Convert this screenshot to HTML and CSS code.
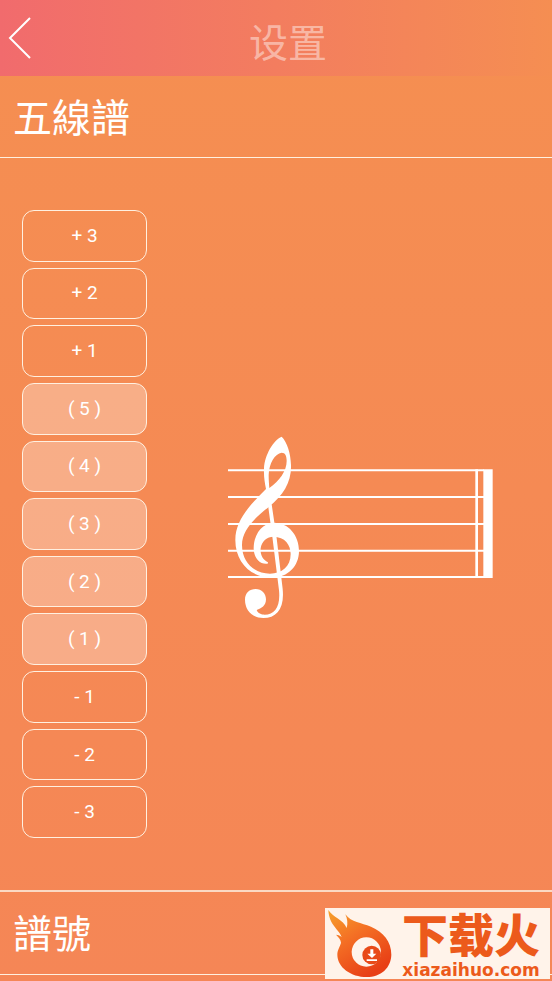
FILE: index.html
```html
<!DOCTYPE html>
<html lang="zh">
<head>
<meta charset="utf-8">
<meta name="viewport" content="width=device-width, initial-scale=1">
<title>设置</title>
<link rel="stylesheet" href="styles.css">
</head>
<body>
<header class="topbar">
  <button class="back" type="button" aria-label="返回">
    <svg width="24" height="42" viewBox="0 0 24 42" fill="none" stroke="#fff" stroke-width="2"><path d="M22 1 2 21l20 20"/></svg>
  </button>
  <h1 class="title">设置</h1>
</header>
<main class="page">
  <h2 class="section-title">五線譜</h2>
  <section class="staff-settings">
    <div class="ranges">
      <button class="range" type="button">+ 3</button>
      <button class="range" type="button">+ 2</button>
      <button class="range" type="button">+ 1</button>
      <button class="range selected" type="button">( 5 )</button>
      <button class="range selected" type="button">( 4 )</button>
      <button class="range selected" type="button">( 3 )</button>
      <button class="range selected" type="button">( 2 )</button>
      <button class="range selected" type="button">( 1 )</button>
      <button class="range" type="button">- 1</button>
      <button class="range" type="button">- 2</button>
      <button class="range" type="button">- 3</button>
    </div>
    <svg class="staff" viewBox="24 33 795 549" fill="#fff" role="img" aria-label="高音譜號">
      <path d="M24 136H792M24 216H792M24 297H792M24 377H792M24 456H792" stroke="#fff" stroke-width="6"/>
      <path d="M766 133h8v326h-8zM790 133h28v326h-28z"/>
      <path fill-rule="evenodd" d="M185 35C160 45 134 90 132 130C131 155 134 172 138 192C90 240 46 285 46 345C46 412 93 458 155 458C205 458 237 422 237 378C237 330 205 293 162 293C125 293 101 330 101 370C101 398 120 420 143 416L144 412C127 403 120 387 122 370C125 348 142 335 160 335C195 335 212 360 212 387C212 425 185 446 150 446C103 446 66 412 66 360C66 312 110 275 147 245C190 212 215 170 213 120C212 85 202 52 185 35ZM185 83C165 85 147 115 146 150C146 165 147 175 148 189C178 168 200 138 200 108C200 93 196 83 185 83Z"/>
      <path d="M144 240L155 238L170 340L188 492C194 550 170 579 130 579C96 579 75 555 75 524C75 504 89 492 107 492C125 492 138 506 138 523C138 543 124 550 110 555C114 565 124 569 134 569C164 569 182 545 177 496L157 335Z"/>
    </svg>
  </section>
  <h2 class="section-title next">譜號</h2>
</main>
<aside class="watermark">
  <svg class="flame" viewBox="0 0 201 213" aria-hidden="true">
    <defs><linearGradient id="fire" x1="0" y1="0" x2=".6" y2="1"><stop offset="0" stop-color="#f6a12b"/><stop offset=".45" stop-color="#f47025"/><stop offset="1" stop-color="#e83f16"/></linearGradient></defs>
    <path fill="url(#fire)" d="M10 6C24 28 54 34 65 60C69 46 67 32 61 19C80 44 108 44 138 56C175 72 199 100 199 140C198 180 168 207 125 207C78 207 37 178 37 140C37 125 46 114 48 104C47 94 41 88 33 80C38 80 44 82 50 87C44 66 12 52 10 6Z"/>
    <circle cx="124" cy="132" r="44" fill="#fff4eb"/>
    <circle cx="140" cy="141" r="28" fill="#e84a19"/>
    <path fill="#fff" d="M136 124h9v13h9l-13 13-14-13h9zM125 154h31v5h-31z"/>
  </svg>
  <div class="brand">
    <span class="brand-name">下载火</span>
    <span class="brand-site">xiazaihuo.com</span>
  </div>
</aside>
</body>
</html>
```
FILE: styles.css
```css
* {
  box-sizing: border-box;
}

body {
  margin: 0;
  min-height: 100vh;
  display: flex;
  flex-direction: column;
  position: relative;
  color: #fff;
  background: linear-gradient(#f58f51, #f58a54 50%, #f58656);
  font-family: Roboto, "Noto Sans CJK TC", sans-serif;
}

.topbar {
  display: flex;
  align-items: center;
  height: 76px;
  padding-left: 8px;
  background: linear-gradient(90deg, #f16b6d, #f37d5f 50%, #f58e52);
}

.back {
  display: flex;
  padding: 0;
  border: 0;
  background: none;
}

.title {
  flex: 1;
  margin: 0;
  padding: 4px 8px 0 0;
  text-align: center;
  font: 400 39px/56px "Noto Sans CJK SC", sans-serif;
  color: rgba(255, 255, 255, 0.45);
}

.page {
  flex: 1;
  display: flex;
  flex-direction: column;
  padding-bottom: 6px;
}

.section-title {
  margin: 0;
  padding: 11px 13px 14px;
  border-bottom: 1px solid #fff0e0;
  font: 400 39px/56px "Noto Sans CJK TC", sans-serif;
}

.section-title.next {
  padding-bottom: 15px;
  border-top: 2px solid #fbd9c4;
}

.staff-settings {
  flex: 1;
  display: flex;
  align-items: center;
  gap: 81px;
  padding: 52px 59px 52px 22px;
}

.ranges {
  align-self: stretch;
  width: 125px;
  display: grid;
  grid-auto-rows: 1fr;
  gap: 6px;
}

.range {
  padding: 0;
  border: 1px solid #fff0e0;
  border-radius: 12px;
  background: none;
  color: #fff;
  font: 400 19px/24px Roboto, sans-serif;
}

.range.selected {
  background: rgba(255, 255, 255, 0.3);
}

.staff {
  flex: 1;
  min-width: 0;
  margin-top: 6px;
}

.watermark {
  position: absolute;
  right: 2px;
  bottom: 2px;
  width: 225px;
  height: 71px;
  display: flex;
  background: #fff3ea;
  color: #ec5a1b;
}

.flame {
  width: 67px;
  height: 71px;
}

.brand {
  display: flex;
  flex-direction: column;
  justify-content: space-between;
  align-items: center;
  flex: 1;
  padding-top: 2px;
  white-space: nowrap;
}

.brand-name {
  font: 900 46px/44px "Noto Sans CJK SC", sans-serif;
}

.brand-site {
  font: 700 17px/18px "DejaVu Sans", sans-serif;
}
```
